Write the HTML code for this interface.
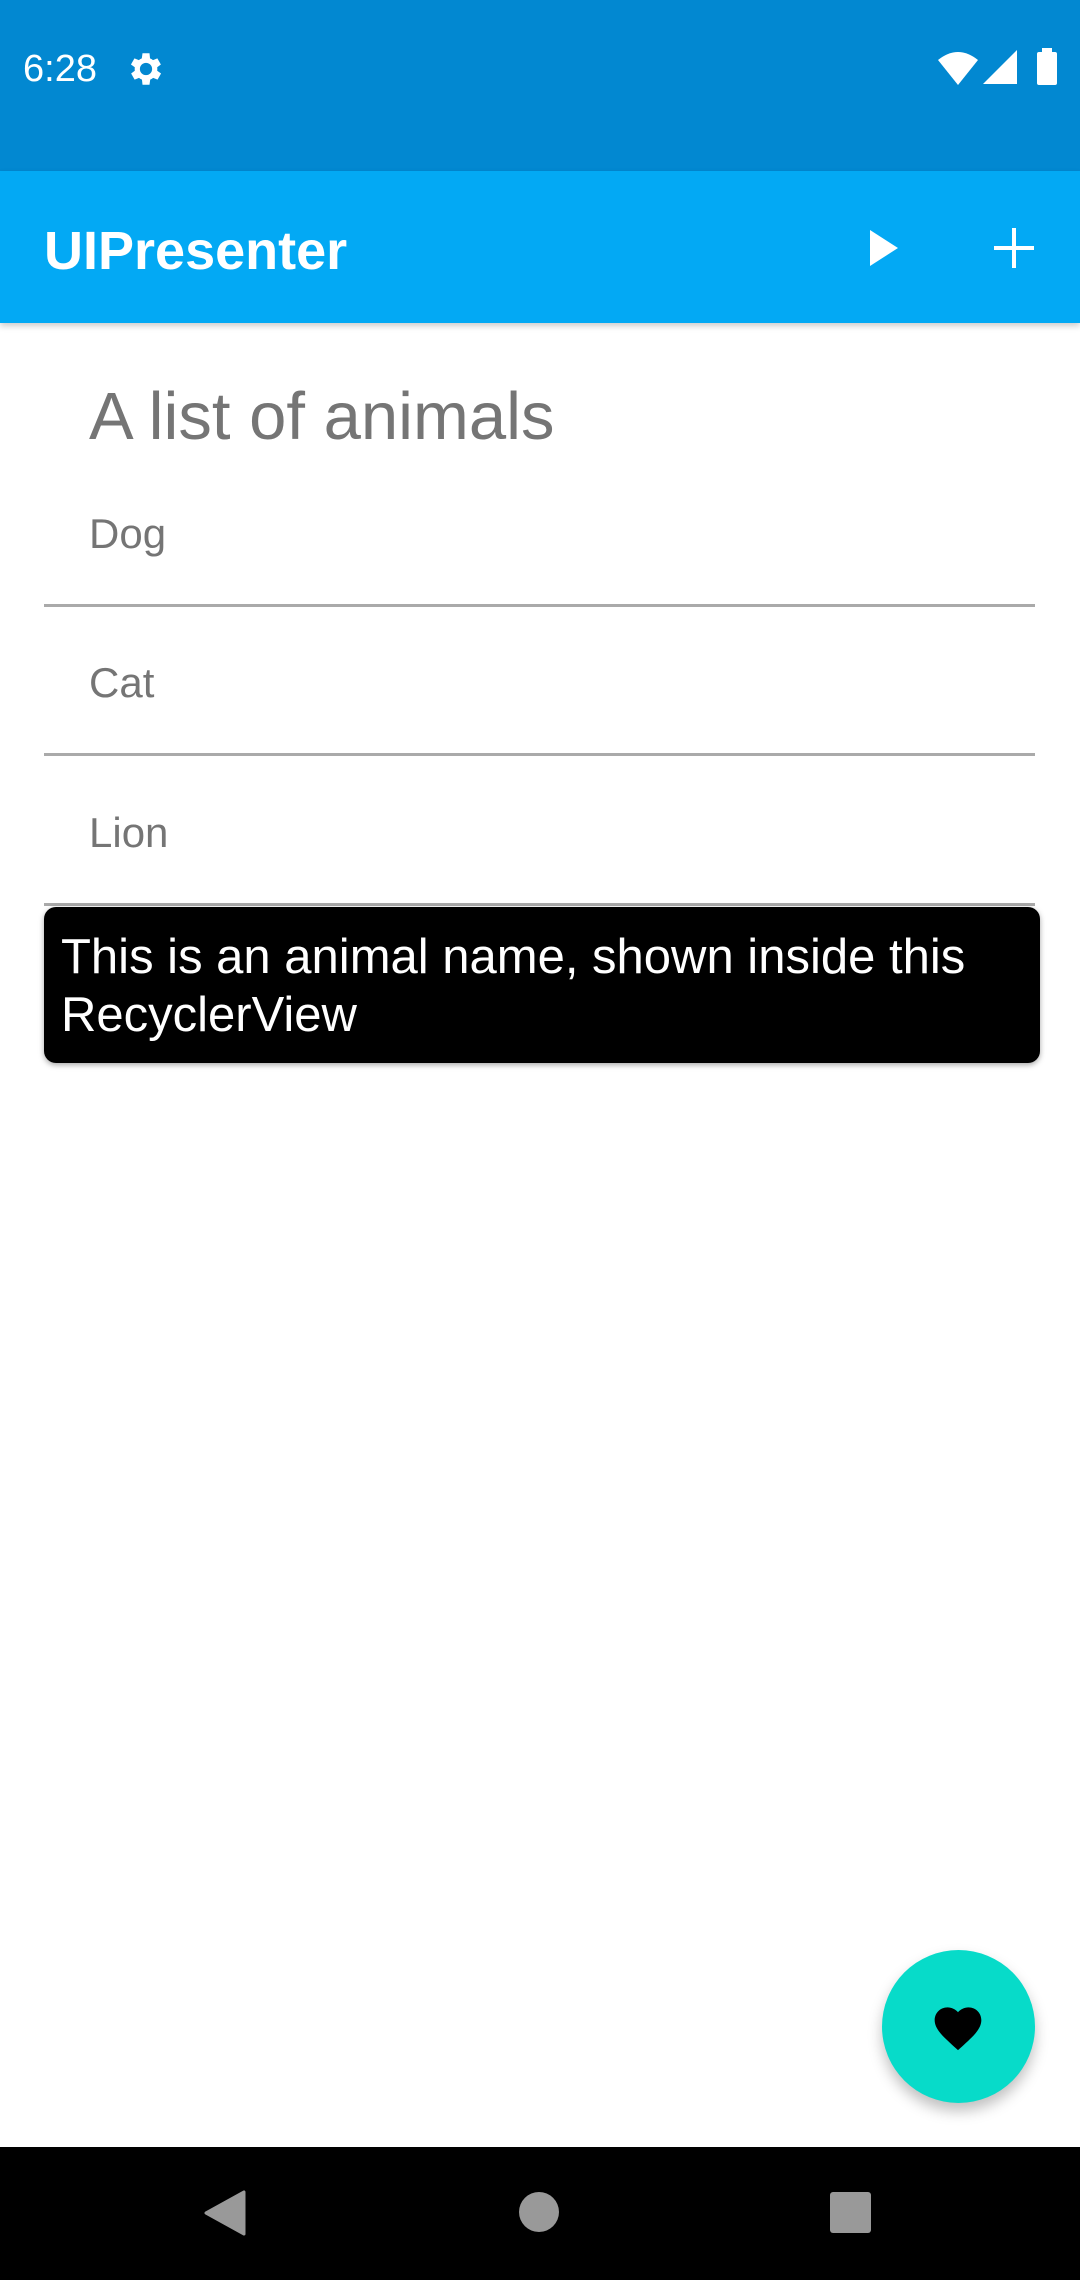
<!DOCTYPE html>
<html><head><meta charset="utf-8"><style>
*{margin:0;padding:0;box-sizing:border-box}
body{width:1080px;height:2280px;position:relative;background:#fff;font-family:"Liberation Sans",sans-serif;overflow:hidden}
.abs{position:absolute}
.t{position:absolute;white-space:nowrap}
.div{position:absolute;left:44px;width:991px;height:3px;background:#aaa}
</style></head><body>
<div class="abs" style="left:0;top:0;width:1080px;height:171px;background:#0288d1"></div>
<div class="t" style="left:23px;top:48px;font-size:38px;color:#fff">6:28</div>
<svg class="abs" style="left:125px;top:48px" width="42" height="42" viewBox="0 0 24 24"><path fill="#fff" d="M19.4 13a7.5 7.5 0 000-2l2.1-1.6-2-3.5-2.5 1a7 7 0 00-1.7-1L15 3h-4l-.4 2.9a7 7 0 00-1.7 1l-2.5-1-2 3.5L6.6 11a7.5 7.5 0 000 2l-2.1 1.6 2 3.5 2.5-1a7 7 0 001.7 1L11 21h4l.4-2.9a7 7 0 001.7-1l2.5 1 2-3.5zM13 15.5a3.5 3.5 0 110-7 3.5 3.5 0 010 7z" transform="translate(-1 0)"/></svg>
<svg class="abs" style="left:936px;top:50px" width="44" height="36" viewBox="0 0 44 36"><path fill="#fff" d="M22 35L2 10Q22 -6 42 10z"/></svg>
<svg class="abs" style="left:981px;top:50px" width="38" height="36" viewBox="0 0 38 36"><path fill="#fff" d="M36 0V34H2z"/></svg>
<div class="abs" style="left:1037px;top:52px;width:20px;height:33px;background:#fff;border-radius:2px"></div>
<div class="abs" style="left:1042px;top:48px;width:10px;height:5px;background:#fff"></div>

<div class="abs" style="left:0;top:171px;width:1080px;height:152px;background:#03a9f4;box-shadow:0 3px 6px rgba(0,0,0,.2)"></div>
<div class="t" style="left:44px;top:220px;font-size:54px;font-weight:bold;color:#fff">UIPresenter</div>
<svg class="abs" style="left:868px;top:228px" width="36" height="40" viewBox="0 0 36 40"><path fill="#fff" d="M2 2L30 20L2 38z"/></svg>
<div class="abs" style="left:994px;top:246px;width:40px;height:4px;background:#fff"></div>
<div class="abs" style="left:1012px;top:228px;width:4px;height:40px;background:#fff"></div>

<div class="t" style="left:89px;top:378px;font-size:67px;color:#757575">A list of animals</div>
<div class="t" style="left:89px;top:510px;font-size:42px;color:#757575">Dog</div>
<div class="div" style="top:604px"></div>
<div class="t" style="left:89px;top:659px;font-size:42px;color:#757575">Cat</div>
<div class="div" style="top:753px"></div>
<div class="t" style="left:89px;top:809px;font-size:42px;color:#757575">Lion</div>
<div class="div" style="top:903px"></div>
<div class="abs" style="left:44px;top:907px;width:996px;height:156px;background:#000;border-radius:12px;box-shadow:0 2px 6px rgba(0,0,0,.35)"></div>
<div class="abs" style="left:61px;top:928px;font-size:49px;line-height:58px;color:#fff;white-space:nowrap">This is an animal name, shown inside this<br>RecyclerView</div>

<div class="abs" style="left:882px;top:1950px;width:153px;height:153px;border-radius:50%;background:#07dbc9;box-shadow:0 8px 14px rgba(0,0,0,.25)"></div>
<svg class="abs" style="left:930px;top:2000px" width="56" height="52" viewBox="0 0 24 22"><path fill="#000" d="M12 21.35l-1.45-1.32C5.4 15.360 2 12.28 2 8.5 2 5.42 4.420 3 7.5 3c1.74 0 3.41.81 4.5 2.09C13.09 3.81 14.76 3 16.5 3 19.58 3 22 5.42 22 8.5c0 3.78-3.4 6.86-8.55 11.54z"/></svg>

<div class="abs" style="left:0;top:2147px;width:1080px;height:133px;background:#000"></div>
<svg class="abs" style="left:204px;top:2190px" width="42" height="46" viewBox="0 0 42 46"><path fill="#999" d="M40 2V44L2 23z" stroke="#999" stroke-width="3" stroke-linejoin="round"/></svg>
<div class="abs" style="left:519px;top:2192px;width:40px;height:40px;border-radius:50%;background:#999"></div>
<div class="abs" style="left:830px;top:2192px;width:41px;height:41px;border-radius:3px;background:#999"></div>
</body></html>
